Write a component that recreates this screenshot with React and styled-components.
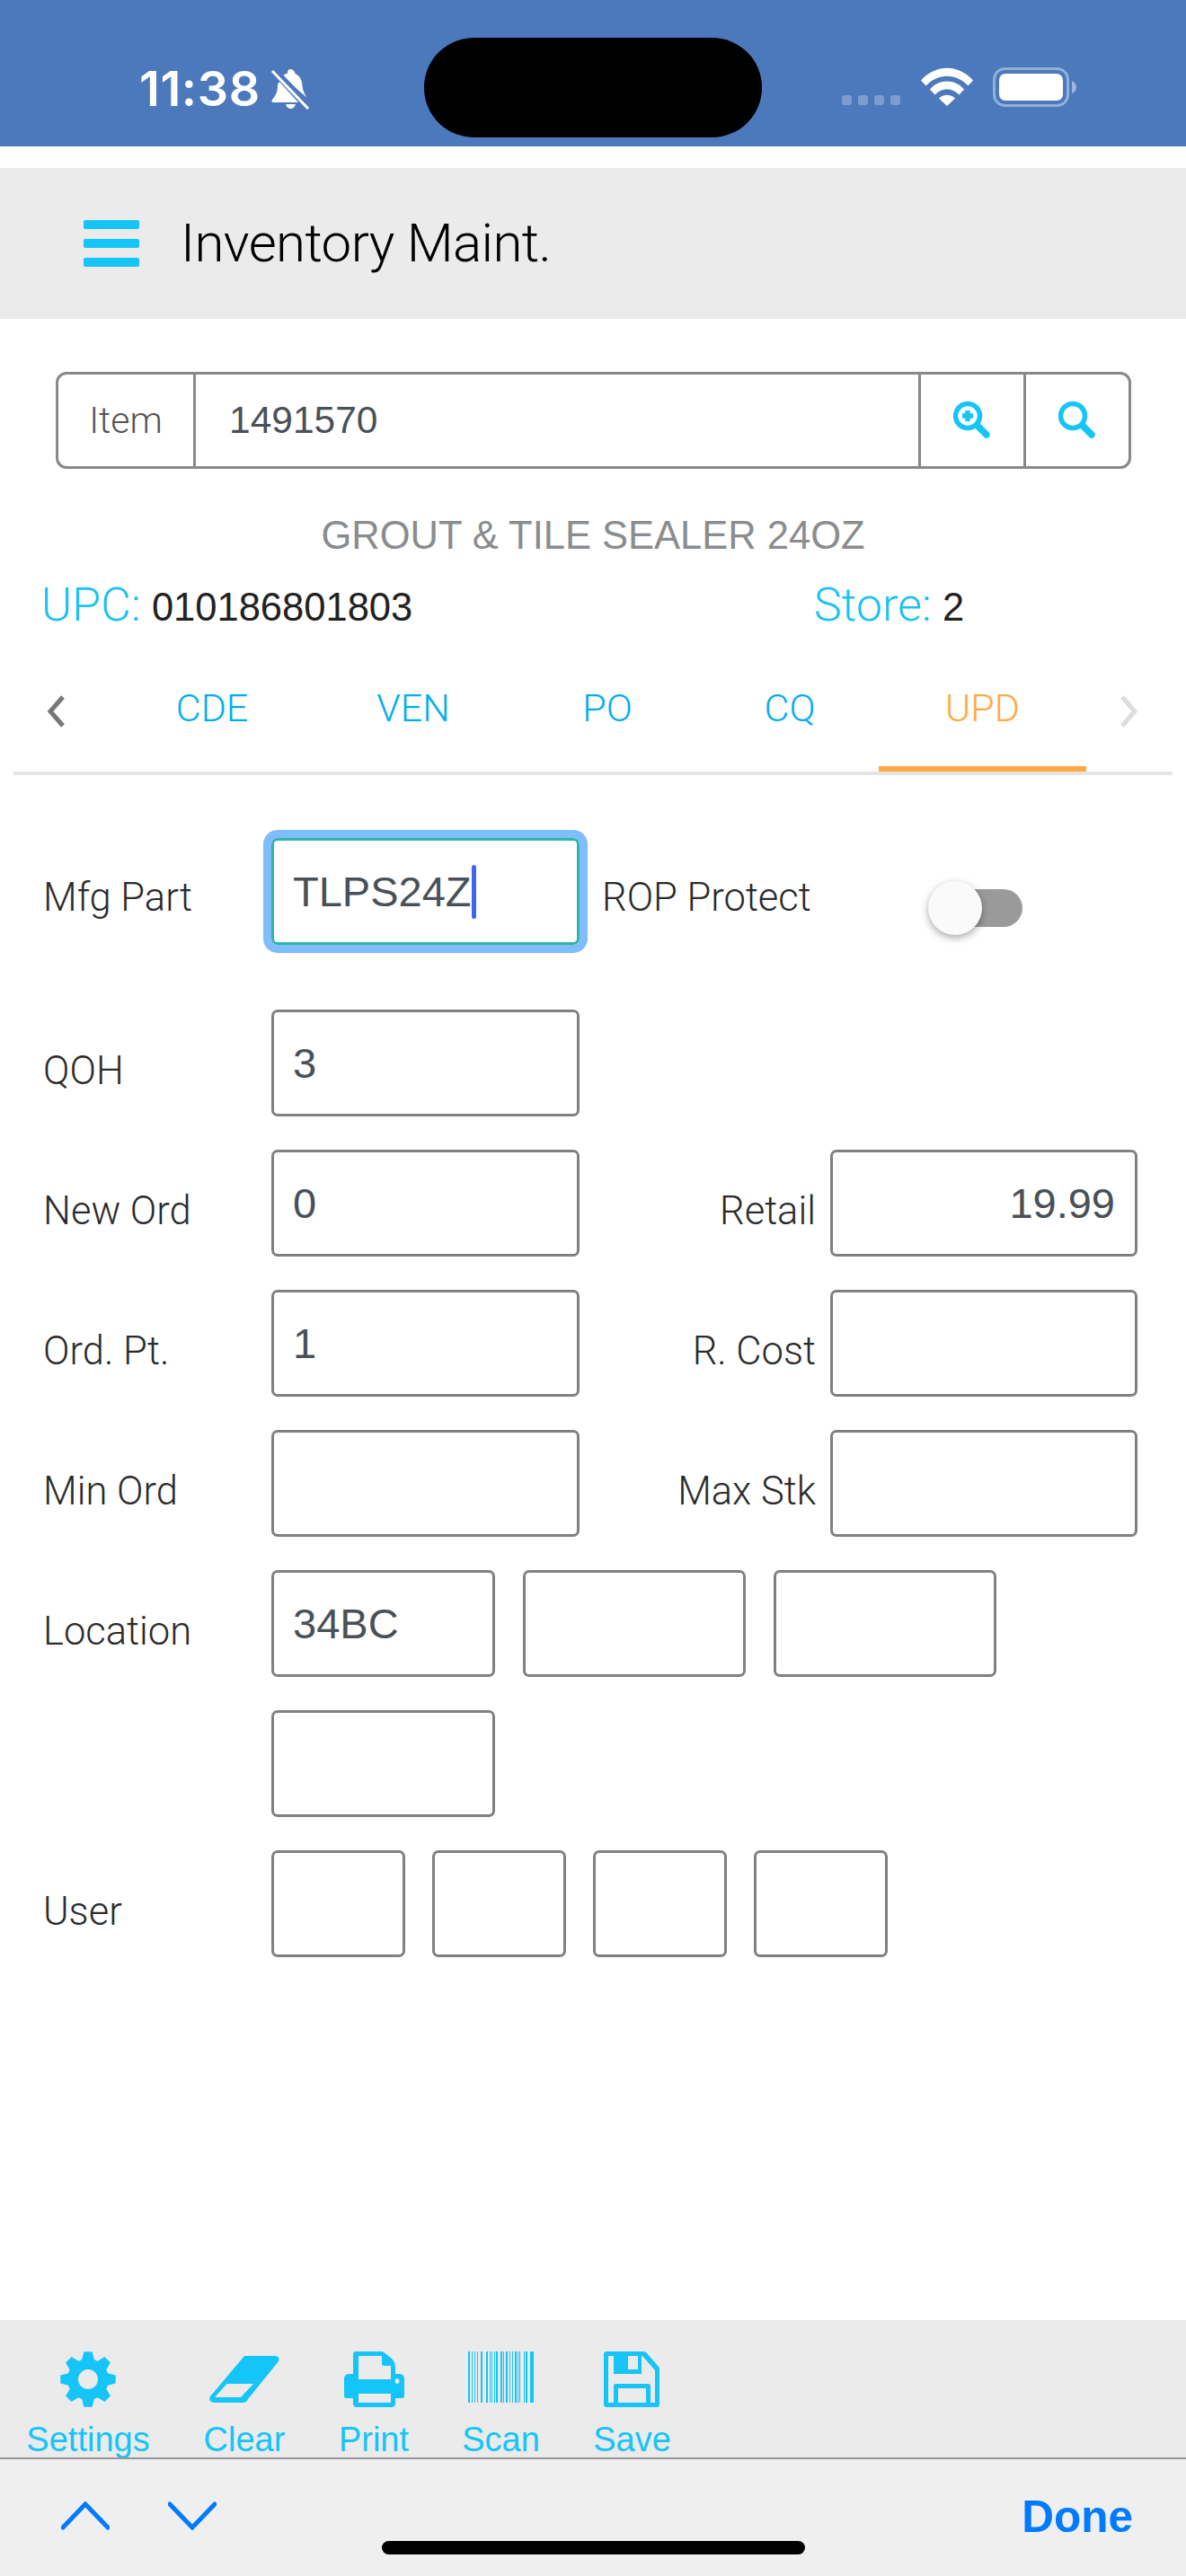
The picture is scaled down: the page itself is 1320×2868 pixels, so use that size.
import React from "react";
import styled, { createGlobalStyle } from "styled-components";

const BLUE = "#15c5f7";
const SANS = '"Liberation Sans", Arial, sans-serif';
const LIGHT = 'Roboto, "Liberation Sans", sans-serif';

const Global = createGlobalStyle`
  html, body { margin: 0; padding: 0; background: #fff; }
  * { box-sizing: border-box; }
`;

const Page = styled.div`
  width: 1320px;
  height: 2868px;
  display: flex;
  flex-direction: column;
  overflow: hidden;
  font-family: ${SANS};
`;

const StatusBar = styled.div`
  height: 163px;
  flex: none;
  background: #4c79bc;
  display: flex;
  padding-top: 42px;
  color: #fff;
`;
const StatusLeft = styled.div`
  width: 472px;
  height: 111px;
  padding: 34px 0 0 155px;
  display: flex;
  gap: 11px;
  align-items: flex-start;
`;
const Time = styled.div`
  font: 600 54px/46px Inter, sans-serif;
  letter-spacing: 0.6px;
`;
const Island = styled.div`
  width: 376px;
  height: 111px;
  border-radius: 56px / 55px;
  background: #000;
`;
const StatusRight = styled.div`
  padding: 33px 0 0 89px;
  display: flex;
  align-items: flex-start;
`;
const Dots = styled.div`
  display: flex;
  gap: 7px;
  padding-top: 31px;
  margin-right: 23px;
`;
const Dot = styled.div`
  width: 11px;
  height: 11px;
  border-radius: 3px;
  background: rgba(255, 255, 255, 0.27);
`;

const Header = styled.div`
  margin-top: 24px;
  height: 168px;
  flex: none;
  background: #ebebeb;
  display: flex;
  align-items: center;
  padding-left: 93px;
`;
const Burger = styled.div`
  width: 62px;
  display: flex;
  flex-direction: column;
  gap: 11px;
  margin-right: 46px;
`;
const BurgerBar = styled.div`
  height: 10px;
  border-radius: 2px;
  background: ${BLUE};
`;
const HeaderTitle = styled.div`
  font: 300 60px/1 ${LIGHT};
  letter-spacing: -0.6px;
  color: #000;
`;

const SearchBox = styled.div`
  margin: 59px 61px 0 62px;
  height: 108px;
  flex: none;
  display: flex;
  border: 3px solid #86898c;
  border-radius: 12px;
`;
const ItemLabel = styled.div`
  width: 153px;
  display: flex;
  align-items: center;
  justify-content: center;
  font: 300 41px/1 ${LIGHT};
  color: #555;
  border-right: 3px solid #86898c;
`;
const ItemValue = styled.div`
  flex: 1;
  display: flex;
  align-items: center;
  padding-left: 37px;
  font-size: 42.5px;
  color: #495057;
`;
const SearchButton = styled.div`
  width: 117px;
  display: flex;
  align-items: center;
  justify-content: center;
  border-left: 3px solid #86898c;
`;

const ItemName = styled.div`
  margin-top: 49px;
  text-align: center;
  font-size: 43.5px;
  line-height: 50px;
  color: #8a8c8e;
`;

const InfoRow = styled.div`
  margin-top: 25px;
  display: flex;
  height: 56px;
  align-items: center;
`;
const InfoCell = styled.div`
  width: ${(p) => p.$w}px;
  padding-left: ${(p) => p.$pad}px;
  display: flex;
  align-items: baseline;
  gap: 12px;
`;
const InfoKey = styled.span`
  font: 300 52px/1 ${LIGHT};
  color: #1bc2f5;
`;
const InfoVal = styled.span`
  font-size: 43.5px;
  color: #222;
`;

const Tabs = styled.div`
  margin: 22px 15px 0;
  height: 139px;
  flex: none;
  display: flex;
  align-items: stretch;
  border-bottom: 4px solid #e4e4e4;
`;
const Chevron = styled.div`
  width: ${(p) => p.$w}px;
  padding-left: ${(p) => p.$pad}px;
  display: flex;
  align-items: center;
`;
const Tab = styled.div`
  width: ${(p) => p.$w}px;
  display: flex;
  align-items: center;
  justify-content: center;
  font: 300 43px/1 ${LIGHT};
  color: ${(p) => (p.$active ? "#ffa940" : "#00aeef")};
  border-bottom: 6px solid ${(p) => (p.$active ? "#ffa940" : "transparent")};
`;

const Form = styled.div`
  margin-top: 70px;
  padding-left: 48px;
  display: flex;
  flex-direction: column;
  gap: 37px;
`;
const Row = styled.div`
  display: flex;
  height: 119px;
  margin-bottom: ${(p) => p.$after || 0}px;
`;
const Label = styled.div`
  width: ${(p) => p.$w || 254}px;
  padding-top: ${(p) => p.$top || 18}px;
  padding-left: ${(p) => p.$left || 0}px;
  padding-right: ${(p) => (p.$right ? 16 : 0)}px;
  display: flex;
  align-items: center;
  justify-content: ${(p) => (p.$right ? "flex-end" : "flex-start")};
  font: 300 43.5px/1 ${LIGHT};
  color: #2b2b2b;
`;
const Field = styled.div`
  width: ${(p) => p.$w}px;
  height: 119px;
  margin-right: ${(p) => p.$gap || 0}px;
  display: flex;
  align-items: center;
  justify-content: ${(p) => (p.$right ? "flex-end" : "flex-start")};
  padding: 0 22px 0 21px;
  border: 3px solid ${(p) => (p.$focus ? "#2fb5a8" : "#808080")};
  border-radius: 7px;
  box-shadow: ${(p) => (p.$focus ? "0 0 0 9px #80bdff" : "none")};
  font-size: 47px;
  color: #495057;
`;
const Caret = styled.span`
  width: 5px;
  height: 60px;
  border-radius: 3px;
  background: #3f66f0;
`;
const Switch = styled.div`
  margin: 48px 0 0 108px;
  width: 105px;
  height: 60px;
  position: relative;
  display: flex;
  align-items: center;
  justify-content: flex-end;
`;
const SwitchTrack = styled.div`
  width: 90px;
  height: 42px;
  border-radius: 21px;
  background: #9a9a9a;
`;
const SwitchKnob = styled.div`
  position: absolute;
  left: 0;
  top: 0;
  width: 60px;
  height: 60px;
  border-radius: 50%;
  background: #fafafa;
  box-shadow: 0 3px 8px rgba(0, 0, 0, 0.35);
`;

const Toolbar = styled.div`
  margin-top: auto;
  height: 153px;
  flex: none;
  background: #ebebeb;
  display: flex;
`;
const Tool = styled.div`
  width: ${(p) => p.$w}px;
  display: flex;
  flex-direction: column;
  align-items: center;
`;
const ToolIcon = styled.div`
  flex: none;
  height: 62px;
  margin-top: 35px;
  display: flex;
  align-items: ${(p) => p.$align || "center"};
`;
const ToolLabel = styled.div`
  flex: none;
  margin-top: 14px;
  font-size: 38px;
  line-height: 44px;
  color: ${BLUE};
`;

const Accessory = styled.div`
  height: 132px;
  flex: none;
  background: #efeff0;
  border-top: 2px solid #969696;
  position: relative;
  display: flex;
  align-items: flex-start;
  padding: 47px 59px 0 68px;
  gap: 65px;
`;
const Done = styled.div`
  margin-left: auto;
  margin-top: -3px;
  font-size: 49.5px;
  font-weight: 700;
  line-height: 40px;
  color: #007aff;
`;
const HomeBar = styled.div`
  position: absolute;
  left: 425px;
  top: 91px;
  width: 471px;
  height: 15px;
  border-radius: 8px;
  background: #000;
`;

const BellOff = () => (
  <svg width="46" height="46" viewBox="0 0 46 46" fill="#fff">
    <path d="M22 1c3 0 5 2 5.500 5 5 2 7.500 7 8 13 .5 6 2 9 5 13.500L13 9c2-2 4-3 6-3.500C19 3 20 1 22 1z" />
    <path d="M10 15l21 23H3c-1.500 0-2-1.500-1-3 4-4.500 6-9 6-15 0-2 .5-3.500 2-5z" />
    <path d="M17 40h11c-1 3.500-3 5-5.500 5S18 43.500 17 40z" />
    <path d="M2 3l40 42" stroke="#fff" strokeWidth="3" />
    <path d="M5 0l40 42" stroke="#4c79bc" strokeWidth="3" />
  </svg>
);

const Wifi = () => (
  <svg width="58" height="43" viewBox="0 0 58 43" fill="#fff" style={{ marginRight: 22 }}>
    <path d="M0 14.500C16-4 42-4 58 14.500l-5.500 6C39 6 19 6 5.500 20.500z" />
    <path d="M10 24.500C20 12.500 38 12.500 48 24.500l-5.500 6C34 22 24 22 15.500 30.500z" />
    <path d="M20 34.500c5-5 13-5 18 0L29 43z" />
  </svg>
);

const Battery = () => (
  <svg width="94" height="44" viewBox="0 0 94 44">
    <rect x="1.500" y="1.500" width="82" height="41" rx="12" fill="none" stroke="#fff" strokeOpacity="0.4" strokeWidth="3" />
    <rect x="7" y="7" width="71" height="30" rx="7" fill="#fff" />
    <path d="M88 15c3 1 5 4 5 7s-2 6-5 7z" fill="#fff" fillOpacity="0.45" />
  </svg>
);

const Loupe = ({ plus }) => (
  <svg width="42" height="42" viewBox="0 0 42 42" fill="none" stroke={BLUE}>
    <circle cx="16" cy="16" r="13.500" strokeWidth="5.500" />
    <path d="M27 27l10 10" strokeWidth="7.500" strokeLinecap="round" />
    {plus && <path d="M16 10v12M10 16h12" strokeWidth="5.500" />}
  </svg>
);

const Arrow = ({ dir }) => (
  <svg width="20" height="36" viewBox="0 0 20 36" fill="none" stroke={dir === "left" ? "#777" : "#ddd"} strokeWidth="5">
    <path d={dir === "left" ? "M18 2L4 18l14 16" : "M2 2l14 16L2 34"} />
  </svg>
);

const gearPath = () => {
  const pts = [];
  for (let i = 0; i < 8; i++) {
    const a = (i * Math.PI) / 4 - Math.PI / 2;
    [[-0.3, 23], [-0.15, 31], [0.15, 31], [0.3, 23]].forEach(([d, r]) => {
      pts.push(`${(31 + r * Math.cos(a + d)).toFixed(1)} ${(31 + r * Math.sin(a + d)).toFixed(1)}`);
    });
  }
  return `M${pts.join("L")}Z M31 20a11 11 0 1 0 .01 0Z`;
};

const Gear = () => (
  <svg width="62" height="62" viewBox="0 0 62 62" fill={BLUE}>
    <path fillRule="evenodd" d={gearPath()} />
  </svg>
);

const Eraser = () => (
  <svg width="78" height="52" viewBox="0 0 78 52" fill={BLUE}>
    <path
      fillRule="evenodd"
      d="M39 0h34c4 0 5.500 3 4 6L43 48c-1.500 3-3 4-6 4H6c-5 0-7-3-5-7zM19.500 31L6 46h29l14-15z"
    />
  </svg>
);

const Printer = () => (
  <svg width="67" height="62" viewBox="0 0 67 62" fill={BLUE}>
    <path
      fillRule="evenodd"
      d="M13 0h30l10 8c3 3 4 6 4 10v7h4c4 0 6 2 6 6v19c0 1-1 2-2 2h-8v7c0 2-2 3-4 3H14c-2 0-4-1-4-3v-7H2c-1 0-2-1-2-2V31c0-4 2-6 6-6h4V3c0-2 1-3 3-3zM16 5v26h36V16H44c-1 0-2-1-2-2V5zM16 47v10h36V47zM59 30a2.500 3 0 1 0 .01 0z"
    />
  </svg>
);

const BARS = [
  [0, 2], [4, 1], [7, 1], [10, 1], [14, 2], [20, 2], [24, 1], [26, 1], [29, 1], [31, 2],
  [36, 2], [39, 1], [42, 2], [46, 1], [49, 1], [52, 2], [55, 1], [57, 1], [62, 1], [64, 2], [69, 4],
];
const Barcode = () => (
  <svg width="73" height="57" viewBox="0 0 73 57" fill={BLUE}>
    {BARS.map(([x, w]) => (
      <rect key={x} x={x} y="0" width={w} height="57" />
    ))}
  </svg>
);

const Floppy = () => (
  <svg width="63" height="62" viewBox="0 0 63 62" fill={BLUE}>
    <path
      fillRule="evenodd"
      d="M3 0h41c2 0 3 1 4 2l13 15c1 1 1 2 1 4v38c0 2-1 3-3 3H3c-2 0-3-1-3-3V3c0-2 1-3 3-3zM5 5v52h52V21L43 5z"
    />
    <path fillRule="evenodd" d="M11 0h31v25H11zM27 5v15h11V5z" />
    <path fillRule="evenodd" d="M13 36h37c1 0 2 1 2 2v20H11V38c0-1 1-2 2-2zM16 41v16h31V41z" />
  </svg>
);

const Caretish = ({ up }) => (
  <svg width="54" height="32" viewBox="0 0 54 32" fill="none" stroke="#007aff" strokeWidth="5" strokeLinecap="round">
    <path d={up ? "M2 29L27 3l25 26" : "M2 3l25 26L52 3"} />
  </svg>
);

const TOOLS = [
  { label: "Settings", icon: <Gear />, w: 196 },
  { label: "Clear", icon: <Eraser />, w: 152 },
  { label: "Print", icon: <Printer />, w: 136 },
  { label: "Scan", icon: <Barcode />, w: 147, align: "flex-start" },
  { label: "Save", icon: <Floppy />, w: 145 },
];

export default function App() {
  return (
    <Page>
      <Global />
      <StatusBar>
        <StatusLeft>
          <Time>11:38</Time>
          <BellOff />
        </StatusLeft>
        <Island />
        <StatusRight>
          <Dots>
            <Dot /><Dot /><Dot /><Dot />
          </Dots>
          <Wifi />
          <Battery />
        </StatusRight>
      </StatusBar>

      <Header>
        <Burger>
          <BurgerBar /><BurgerBar /><BurgerBar />
        </Burger>
        <HeaderTitle>Inventory Maint.</HeaderTitle>
      </Header>

      <SearchBox>
        <ItemLabel>Item</ItemLabel>
        <ItemValue>1491570</ItemValue>
        <SearchButton><Loupe plus /></SearchButton>
        <SearchButton><Loupe /></SearchButton>
      </SearchBox>

      <ItemName>GROUT &amp; TILE SEALER 24OZ</ItemName>

      <InfoRow>
        <InfoCell $w={906} $pad={46}>
          <InfoKey>UPC:</InfoKey>
          <InfoVal>010186801803</InfoVal>
        </InfoCell>
        <InfoCell $w={300} $pad={0}>
          <InfoKey>Store:</InfoKey>
          <InfoVal>2</InfoVal>
        </InfoCell>
      </InfoRow>

      <Tabs>
        <Chevron $w={109} $pad={37}><Arrow dir="left" /></Chevron>
        <Tab $w={224}>CDE</Tab>
        <Tab $w={224}>VEN</Tab>
        <Tab $w={208}>PO</Tab>
        <Tab $w={198}>CQ</Tab>
        <Tab $w={231} $active>UPD</Tab>
        <Chevron $w={96} $pad={38}><Arrow dir="right" /></Chevron>
      </Tabs>

      <Form>
        <Row $after={35}>
          <Label $top={14}>Mfg Part</Label>
          <Field $w={343} $focus>TLPS24Z<Caret /></Field>
          <Label $w={280} $top={14} $left={25}>ROP Protect</Label>
          <Switch>
            <SwitchTrack />
            <SwitchKnob />
          </Switch>
        </Row>
        <Row>
          <Label>QOH</Label>
          <Field $w={343}>3</Field>
        </Row>
        <Row>
          <Label>New Ord</Label>
          <Field $w={343}>0</Field>
          <Label $w={279} $right>Retail</Label>
          <Field $w={342} $right>19.99</Field>
        </Row>
        <Row>
          <Label>Ord. Pt.</Label>
          <Field $w={343}>1</Field>
          <Label $w={279} $right>R. Cost</Label>
          <Field $w={342} />
        </Row>
        <Row>
          <Label>Min Ord</Label>
          <Field $w={343} />
          <Label $w={279} $right>Max Stk</Label>
          <Field $w={342} />
        </Row>
        <Row>
          <Label>Location</Label>
          <Field $w={249} $gap={31}>34BC</Field>
          <Field $w={248} $gap={31} />
          <Field $w={248} />
        </Row>
        <Row>
          <Label />
          <Field $w={249} />
        </Row>
        <Row>
          <Label>User</Label>
          <Field $w={149} $gap={30} />
          <Field $w={149} $gap={30} />
          <Field $w={149} $gap={30} />
          <Field $w={149} />
        </Row>
      </Form>

      <Toolbar>
        {TOOLS.map((t) => (
          <Tool key={t.label} $w={t.w}>
            <ToolIcon $align={t.align}>{t.icon}</ToolIcon>
            <ToolLabel>{t.label}</ToolLabel>
          </Tool>
        ))}
      </Toolbar>
      <Accessory>
        <Caretish up />
        <Caretish />
        <Done>Done</Done>
        <HomeBar />
      </Accessory>
    </Page>
  );
}
